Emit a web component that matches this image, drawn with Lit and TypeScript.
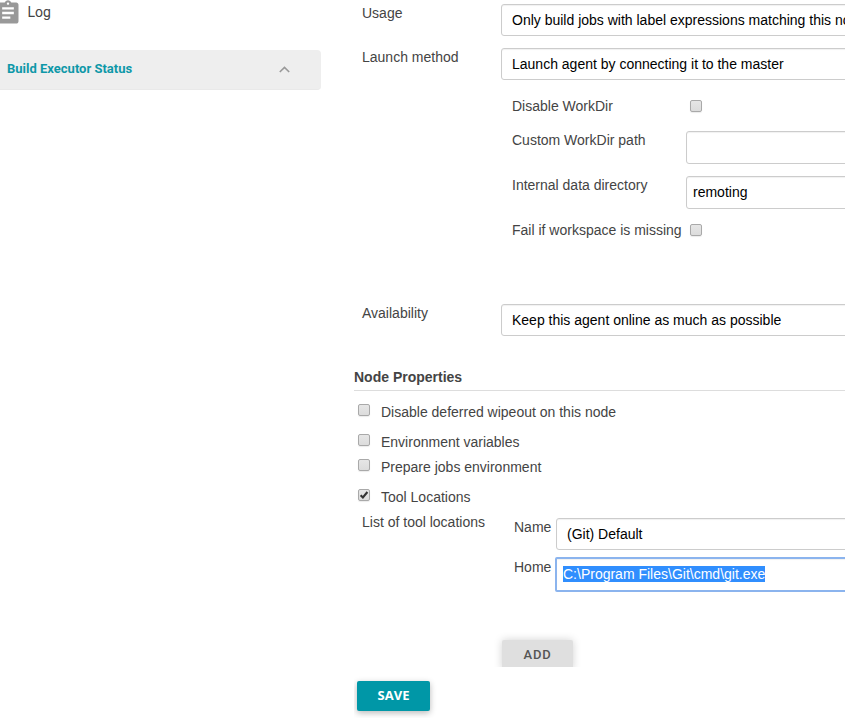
import { LitElement, html, css, svg } from "lit";
import { customElement, property } from "lit/decorators.js";

@customElement("check-box")
class CheckBox extends LitElement {
  @property({ type: Boolean }) checked = false;
  static styles = css`
    :host { display: block; flex: none; width: 12px; height: 12px; }
    .box {
      box-sizing: border-box; width: 12px; height: 12px; border: 1px solid #a9a9a9; border-radius: 2px;
      background: linear-gradient(#e6e6e6, #dcdcdc); box-shadow: 0 1px 1px rgba(0, 0, 0, 0.08);
    }
    svg { display: block; width: 10px; height: 10px; }
  `;
  render() {
    return html`<div class="box">
      ${this.checked
        ? html`<svg viewBox="0 0 10 10">${svg`<path d="M1.6 5.2 L3.9 7.5 L8.4 2" fill="none" stroke="#333" stroke-width="2.1"/>`}</svg>`
        : null}
    </div>`;
  }
}

@customElement("app-root")
class AppRoot extends LitElement {
  static styles = css`
    :host {
      display: flex; width: 845px; height: 718px; overflow: hidden; background: #fff; color: #444;
      font: 14px/20px "Liberation Sans", Arial, sans-serif; white-space: nowrap;
    }
    .side { flex: none; width: 321px; font-family: Roboto, sans-serif; }
    .log { display: flex; height: 50px; }
    .log svg { flex: none; width: 28px; height: 28px; margin: -1px 0 0 -6.5px; }
    .log span { margin: 2px 0 0 6px; }
    .panel {
      box-sizing: border-box; display: flex; height: 40px; padding: 9px 31px 0 7px;
      justify-content: space-between; background: #eee; border-radius: 0 4px 4px 0;
      border-bottom: 1px solid #e9e9e9;
      color: #0e98a8; font-size: 13px; font-weight: 700;
    }
    .panel svg { width: 11px; height: 7px; margin-top: 7px; }
    .main { flex: none; width: 491px; margin-left: 33px; overflow: hidden; }
    .row { display: flex; height: 44px; }
    .row .label { flex: none; width: 139px; padding: 3px 0 0 8px; }
    .field {
      box-sizing: border-box; flex: none; width: 400px; height: 32px; margin-top: 4px; padding: 5px 10px;
      border: 1px solid #ccc; border-radius: 3px; color: #000; box-shadow: inset 0 1px 1px rgba(0, 0, 0, 0.06);
    }
    .sub { display: flex; margin-left: 158px; }
    .sub .label { flex: none; width: 174px; }
    .sub .field { height: 33px; margin-top: 1px; padding: 5px 6px; }
    .sub check-box { margin: 4px 0 0 4px; }
    .s2 { height: 45px; }
    .s3 { height: 80px; }
    .first { height: 42px; padding-top: 8px; box-sizing: border-box; }
    .heading {
      box-sizing: border-box; height: 47px; padding-top: 23px;
      border-bottom: 1px solid #ddd; font-weight: 700;
    }
    .option { display: flex; margin-left: 4px; height: 25px; }
    .option.tall { height: 30px; }
    .option check-box { margin: 2px 11px 0 0; }
    .options { padding-top: 11px; }
    .tools { display: flex; height: 118px; }
    .tools > .label { flex: none; width: 152px; padding-left: 8px; }
    .tool { display: flex; height: 40px; }
    .tool .label { flex: none; width: 42px; padding-top: 5px; }
    .tool .field { margin-top: 6px; }
    .tool .focus {
      height: 35px; width: 400px; margin: 5px 0 0 -1px; padding: 5px 6px; border: 2px solid #8bb4ee;
      border-radius: 2px;
    }
    .focus span { display: inline-block; height: 16px; line-height: 16px; margin-top: 1px; background: #308efe; color: #fff; }
    .clip { height: 37px; padding: 10px 0 0 148px; box-sizing: border-box; overflow: hidden; }
    .btn { box-sizing: border-box; border-radius: 2px; text-align: center; font-family: Roboto, sans-serif; font-size: 13px; }
    .add {
      width: 71px; height: 30px; padding-top: 5px; background: #dfdfdf; color: #555; font-weight: 500;
      letter-spacing: 0.8px; box-shadow: 0 0 8px rgba(0, 0, 0, 0.18);
    }
    .save {
      width: 73px; height: 30px; margin: 14px 0 0 3px; padding-top: 4px; background: #0097a7; color: #fff;
      font-family: "Open Sans", sans-serif; font-size: 13px; font-weight: 700;
      box-shadow: 0 2px 6px rgba(0, 0, 0, 0.28);
    }
  `;

  private select(label: string, value: string) {
    return html`<div class="row"><div class="label">${label}</div><div class="field">${value}</div></div>`;
  }

  render() {
    return html`
      <div class="side">
        <div class="log">
          <svg viewBox="0 0 24 24"><path fill="#999" d="M19 3h-4.18C14.4 1.84 13.3 1 12 1c-1.3 0-2.4.84-2.82 2H5c-1.1 0-2 .9-2 2v14c0 1.1.9 2 2 2h14c1.1 0 2-.9 2-2V5c0-1.1-.9-2-2-2zm-7 0c.55 0 1 .45 1 1s-.45 1-1 1-1-.45-1-1 .45-1 1-1zm2 14H7v-2h7v2zm3-4H7v-2h10v2zm0-4H7V7h10v2z"/></svg>
          <span>Log</span>
        </div>
        <div class="panel">
          <span>Build Executor Status</span>
          <svg viewBox="0 0 11 7"><path d="M0.8 6 L5.5 1.4 L10.2 6" fill="none" stroke="#999" stroke-width="1.6"/></svg>
        </div>
      </div>
      <div class="main">
        ${this.select("Usage", "Only build jobs with label expressions matching this node")}
        ${this.select("Launch method", "Launch agent by connecting it to the master")}
        <div class="sub first"><div class="label">Disable WorkDir</div><check-box></check-box></div>
        <div class="sub s2"><div class="label">Custom WorkDir path</div><div class="field"></div></div>
        <div class="sub s2"><div class="label">Internal data directory</div><div class="field">remoting</div></div>
        <div class="sub s3"><div class="label">Fail if workspace is missing</div><check-box></check-box></div>
        ${this.select("Availability", "Keep this agent online as much as possible")}
        <div class="heading">Node Properties</div>
        <div class="options">
          <div class="option tall"><check-box></check-box>Disable deferred wipeout on this node</div>
          <div class="option"><check-box></check-box>Environment variables</div>
          <div class="option tall"><check-box></check-box>Prepare jobs environment</div>
          <div class="option"><check-box checked></check-box>Tool Locations</div>
        </div>
        <div class="tools">
          <div class="label">List of tool locations</div>
          <div class="fields">
            <div class="tool"><div class="label">Name</div><div class="field">(Git) Default</div></div>
            <div class="tool"><div class="label">Home</div><div class="field focus"><span>C:\\Program Files\\Git\\cmd\\git.exe</span></div></div>
          </div>
        </div>
        <div class="clip"><div class="btn add">ADD</div></div>
        <div class="btn save">SAVE</div>
      </div>
    `;
  }
}
